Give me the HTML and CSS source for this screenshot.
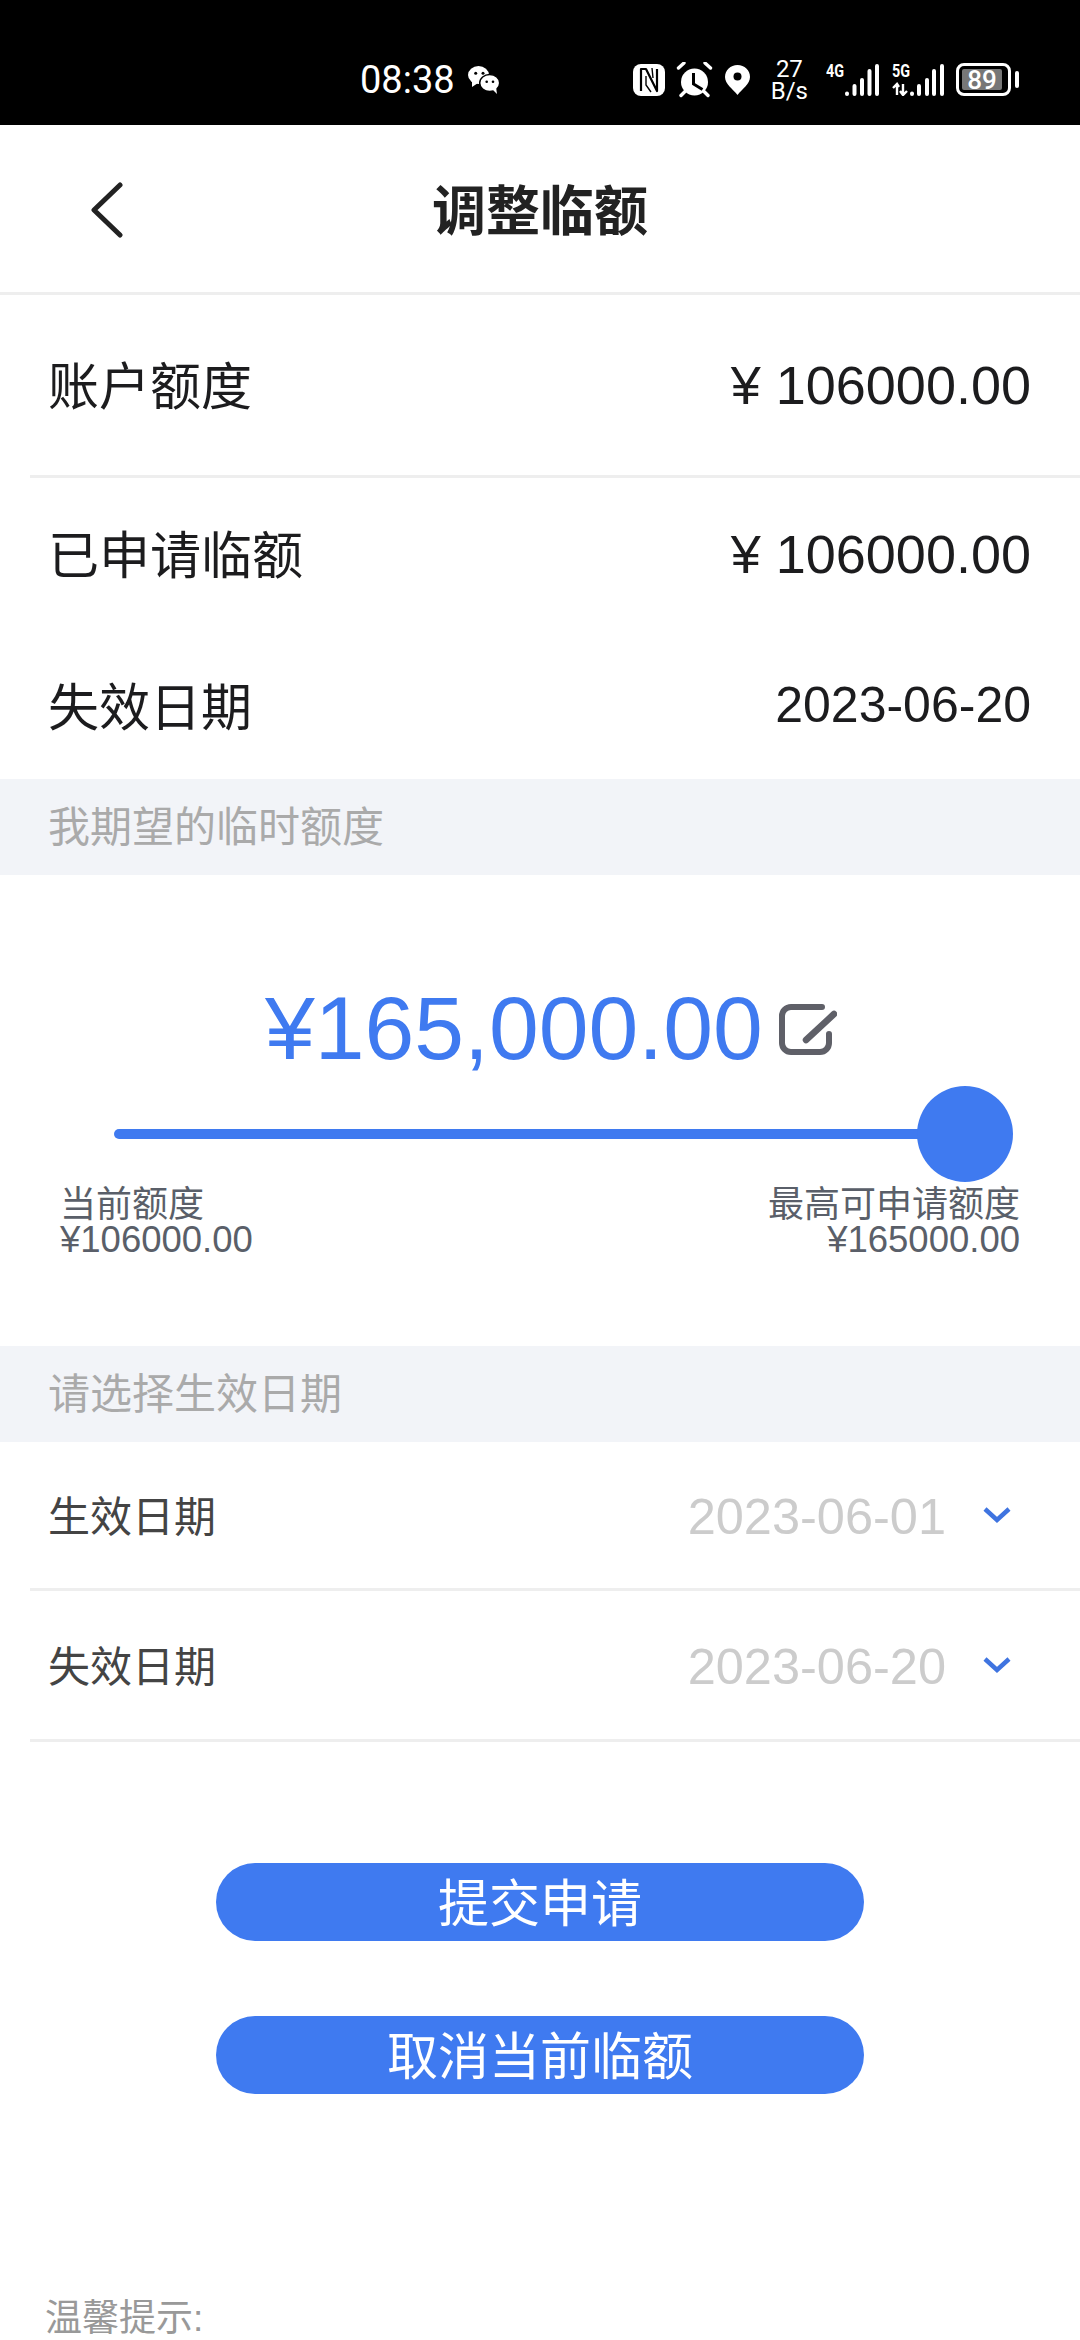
FILE: index.html
```html
<!DOCTYPE html>
<html lang="zh-CN">

<head>
    <meta charset="UTF-8">
    <meta name="viewport" content="width=device-width, initial-scale=1.0">
    <title>调整临额</title>
    <link rel="stylesheet" href="styles.css">
</head>

<body>
    <div class="status-bar">
        <div class="status-left">
            <span class="clock">08:38</span>
            <svg class="wechat" width="32" height="28" viewBox="0 0 32 28">
                <ellipse cx="10.500" cy="9" rx="10.500" ry="9" fill="#fff"/>
                <path d="M4 15l0 6 6-4z" fill="#fff"/>
                <ellipse cx="21.700" cy="17" rx="10" ry="8.500" fill="#fff" stroke="#000" stroke-width="1.500"/>
                <path d="M25 24l4 4-1-7z" fill="#fff"/>
                <circle cx="7.700" cy="7.300" r="1.500" fill="#000"/>
                <circle cx="15" cy="7.300" r="1.500" fill="#000"/>
                <circle cx="18.700" cy="15.700" r="1.300" fill="#000"/>
                <circle cx="25" cy="15.700" r="1.300" fill="#000"/>
            </svg>
        </div>
        <div class="status-right">
            <svg class="nfc" width="32" height="32" viewBox="0 0 32 32">
                <rect x="0" y="0" width="32" height="32" rx="8" fill="#fff"/>
                <path d="M8 27V5h5l11 22V5" fill="none" stroke="#000" stroke-width="2.200" stroke-linejoin="round"/>
                <path d="M13 12v9l5 7M19 4l1 10" fill="none" stroke="#000" stroke-width="1.400"/>
            </svg>
            <svg class="alarm" width="37" height="36" viewBox="0 0 37 36">
                <circle cx="18.500" cy="20" r="13.500" fill="#fff"/>
                <path d="M2.500 6L8 1M34.500 6L29 1M5 33.500l4-4M32 33.500l-4-4" stroke="#fff" stroke-width="3.400" stroke-linecap="round"/>
                <path d="M17.500 11v11l9 5.500" fill="none" stroke="#000" stroke-width="3"/>
            </svg>
            <svg class="pin" width="25" height="30" viewBox="0 0 25 30">
                <path d="M12.500 0C5.500 0 0 5.300 0 12c0 7 8 12 12.500 18C17 24 25 19 25 12 25 5.300 19.500 0 12.500 0z" fill="#fff"/>
                <circle cx="12.500" cy="11.500" r="4" fill="#000"/>
            </svg>
            <div class="speed"><span>27</span><span>B/s</span></div>
            <div class="signal">
                <span class="net">4G</span>
                <svg width="36" height="32" viewBox="0 0 36 32">
                    <path d="M3 29.500v.5M10.500 22v8M18 16v14M25.500 7v23M33 2v28" stroke="#fff" stroke-width="4" stroke-linecap="round"/>
                </svg>
            </div>
            <div class="signal signal-five">
                <span class="net">5G</span>
                <svg width="52" height="32" viewBox="0 0 52 32">
                    <path d="M5 31V20M1 24l4-4 2 3M11 20v11M8 27l3 4 4-4" stroke="#fff" stroke-width="2.400" fill="none"/>
                    <path d="M20 29.500v.5M27 22v8M35 16v14M42 7v23M50 2v28" stroke="#fff" stroke-width="4" stroke-linecap="round"/>
                </svg>
            </div>
            <div class="battery">
                <div class="battery-body"><span class="battery-level">89</span></div>
                <div class="battery-tip"></div>
            </div>
        </div>
    </div>

    <div class="nav">
        <svg class="back" width="34" height="56" viewBox="0 0 34 56">
            <path d="M30 3L4 28l26 25" fill="none" stroke="#222" stroke-width="5" stroke-linecap="round" stroke-linejoin="round"/>
        </svg>
        <h1 class="nav-title">调整临额</h1>
    </div>

    <div class="info-row first">
        <span class="info-label">账户额度</span>
        <span class="info-money">¥ 106000.00</span>
    </div>
    <div class="info-row second">
        <span class="info-label">已申请临额</span>
        <span class="info-money">¥ 106000.00</span>
    </div>
    <div class="info-row third">
        <span class="info-label">失效日期</span>
        <span>2023-06-20</span>
    </div>

    <div class="band">我期望的临时额度</div>

    <div class="quota">
        <div class="quota-amount">
            <span class="amount">¥165,000.00</span>
            <svg class="edit" width="58" height="51" viewBox="0 0 58 51">
                <path d="M43 3H12a9 9 0 0 0-9 9v27a9 9 0 0 0 9 9h29a9 9 0 0 0 9-9v-9" fill="none" stroke="#5f6068" stroke-width="6" stroke-linecap="round"/>
                <path d="M27 36L55 10" fill="none" stroke="#5f6068" stroke-width="6.500" stroke-linecap="round"/>
            </svg>
        </div>
        <div class="slider">
            <div class="slider-track"></div>
            <div class="slider-knob"></div>
        </div>
        <div class="limits">
            <div>
                <div class="limit-name">当前额度</div>
                <div>¥106000.00</div>
            </div>
            <div class="limit-right">
                <div class="limit-name">最高可申请额度</div>
                <div>¥165000.00</div>
            </div>
        </div>
    </div>

    <div class="band">请选择生效日期</div>

    <div class="date-row">
        <span class="date-label">生效日期</span>
        <span class="date-value">2023-06-01</span>
        <svg class="chevron" width="30" height="18" viewBox="0 0 30 18">
            <path d="M3 3l12 11L27 3" fill="none" stroke="#3f74e0" stroke-width="4.500"/>
        </svg>
    </div>
    <div class="date-row">
        <span class="date-label">失效日期</span>
        <span class="date-value">2023-06-20</span>
        <svg class="chevron" width="30" height="18" viewBox="0 0 30 18">
            <path d="M3 3l12 11L27 3" fill="none" stroke="#3f74e0" stroke-width="4.500"/>
        </svg>
    </div>

    <div class="actions">
        <button class="btn">提交申请</button>
        <button class="btn">取消当前临额</button>
    </div>

    <div class="tips">温馨提示:</div>
</body>

</html>
```

FILE: styles.css
```css
* {
    box-sizing: border-box;
}

html,
body {
    height: 2340px;
    overflow: hidden;
}

body {
    margin: 0;
    background: #fff;
    font-family: "Liberation Sans", "Noto Sans CJK SC", sans-serif;
    color: #1c1c1e;
}

.status-bar {
    height: 125px;
    background: #000;
    color: #fff;
    display: flex;
    align-items: center;
    padding: 34px 61px 0 360px;
    justify-content: space-between;
}

.status-left {
    display: flex;
    align-items: center;
    gap: 13px;
}

.clock {
    font-family: Roboto, sans-serif;
    font-size: 38px;
}

.status-right {
    display: flex;
    align-items: center;
}

.nfc {
    margin-right: 11px;
}

.alarm {
    margin-right: 12px;
}

.pin {
    margin-right: 21px;
}

.speed {
    display: flex;
    flex-direction: column;
    align-items: center;
    font-family: Roboto, sans-serif;
    font-size: 24px;
    line-height: 22px;
    margin-right: 18px;
}

.signal {
    display: flex;
    align-items: flex-start;
    margin-right: 12px;
    height: 32px;
}

.net {
    font-family: Roboto, sans-serif;
    font-size: 18px;
    font-weight: 700;
    line-height: 14px;
    width: 18px;
    transform: scaleX(0.8);
    transform-origin: left;
    white-space: nowrap;
}

.signal-five .net {
    margin-right: -18px;
}

.battery {
    display: flex;
    align-items: center;
    gap: 4px;
}

.battery-body {
    width: 55px;
    height: 33px;
    border: 3px solid #fff;
    border-radius: 8px;
    padding: 3px 6px 3px 3px;
    display: flex;
}

.battery-level {
    flex: 1;
    background: #777;
    border-radius: 2px;
    font-family: Roboto, sans-serif;
    font-size: 26px;
    font-weight: 500;
    line-height: 22px;
    text-align: center;
}

.battery-tip {
    width: 4px;
    height: 17px;
    background: #fff;
    border-radius: 2px;
}

.nav {
    height: 170px;
    border-bottom: 3px solid #eee;
    position: relative;
    display: flex;
    align-items: center;
    justify-content: center;
    padding-bottom: 3px;
}

.back {
    position: absolute;
    left: 90px;
    top: 57px;
}

.nav-title {
    margin: 0;
    font-size: 54px;
    font-weight: 700;
    color: #222;
}

.info-row {
    display: flex;
    justify-content: space-between;
    align-items: center;
    padding: 0 49px 0 48px;
    font-size: 50px;
}

.info-label {
    font-size: 51px;
    margin-bottom: 5px;
}

.info-money {
    font-size: 54px;
}

.info-row.first {
    height: 183px;
    margin-left: 30px;
    padding-left: 18px;
    border-bottom: 3px solid #eee;
}

.info-row.second {
    height: 152px;
}

.info-row.third {
    height: 149px;
}

.info-row.third .info-label {
    margin-bottom: 2px;
}

.band {
    height: 96px;
    background: #f2f4f8;
    color: #aaa;
    font-size: 42px;
    line-height: 97px;
    padding-left: 48px;
}

.quota {
    height: 471px;
    padding-top: 100px;
}

.quota-amount {
    display: flex;
    align-items: center;
    padding-left: 265px;
    height: 106px;
}

.amount {
    font-size: 89.500px;
    color: #3f7af0;
}

.edit {
    margin-left: 16px;
    margin-top: 2px;
}

.slider {
    position: relative;
    height: 10px;
    margin: 48px 0 0 114px;
    width: 851px;
}

.slider-track {
    height: 10px;
    border-radius: 5px;
    background: #3f7af0;
}

.slider-knob {
    position: absolute;
    right: -48px;
    top: -43px;
    width: 96px;
    height: 96px;
    border-radius: 50%;
    background: #3f7af0;
}

.limits {
    display: flex;
    justify-content: space-between;
    padding: 48px 60px 0 60px;
    font-size: 36.500px;
    line-height: 35px;
    color: #5a5f69;
}

.limit-name {
    font-size: 36px;
}

.limit-right {
    text-align: right;
}

.date-row {
    height: 149px;
    margin-left: 30px;
    padding: 0 68px 0 18px;
    border-bottom: 3px solid #eee;
    display: flex;
    align-items: center;
}

.date-row + .date-row {
    height: 151px;
}

.date-label {
    font-size: 42px;
    color: #444;
    flex: 1;
    margin-bottom: 3px;
}

.date-value {
    font-size: 50.500px;
    color: #ccc;
    margin-top: 2px;
}

.chevron {
    margin-left: 36px;
}

.actions {
    display: flex;
    flex-direction: column;
    align-items: center;
    gap: 75px;
    padding-top: 121px;
}

.btn {
    width: 648px;
    height: 78px;
    border: 0;
    border-radius: 39px;
    background: #3f7af0;
    color: #fff;
    font-family: inherit;
    font-size: 51px;
    padding: 0 0 16px;
}

.tips {
    margin-top: 194px;
    padding-left: 45px;
    font-size: 37px;
    color: #999;
}
```
